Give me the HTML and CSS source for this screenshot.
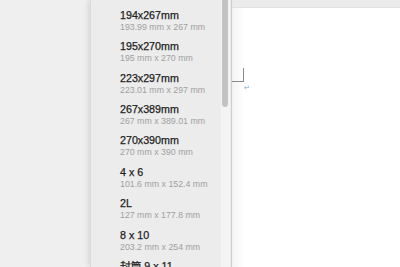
FILE: index.html
```html
<!DOCTYPE html>
<html>
<head>
<meta charset="utf-8">
<link rel="stylesheet" href="styles.css">
</head>
<body>
<div class="app">
  <div class="side"></div>
  <div class="menu">
    <ul class="list">
      <li class="item"><div class="title">194x267mm</div><div class="sub">193.99 mm x 267 mm</div></li>
      <li class="item"><div class="title">195x270mm</div><div class="sub">195 mm x 270 mm</div></li>
      <li class="item"><div class="title">223x297mm</div><div class="sub">223.01 mm x 297 mm</div></li>
      <li class="item"><div class="title">267x389mm</div><div class="sub">267 mm x 389.01 mm</div></li>
      <li class="item"><div class="title">270x390mm</div><div class="sub">270 mm x 390 mm</div></li>
      <li class="item"><div class="title">4 x 6</div><div class="sub">101.6 mm x 152.4 mm</div></li>
      <li class="item"><div class="title">2L</div><div class="sub">127 mm x 177.8 mm</div></li>
      <li class="item"><div class="title">8 x 10</div><div class="sub">203.2 mm x 254 mm</div></li>
      <li class="item"><div class="title">封筒 9 x 11</div><div class="sub">228.6 mm x 279.4 mm</div></li>
    </ul>
    <div class="track"><div class="thumb"></div></div>
  </div>
  <div class="doc">
    <div class="topbar"></div>
    <div class="page">
      <div class="mark"></div>
      <div class="ret">↵</div>
    </div>
  </div>
</div>
</body>
</html>
```

FILE: styles.css
```css
html, body {
  margin: 0;
  padding: 0;
  width: 400px;
  height: 267px;
  overflow: hidden;
  background: #eeeeee;
}
.app {
  display: flex;
  width: 400px;
  height: 267px;
}
.side {
  width: 90px;
  flex: none;
  background: #efefef;
}
.menu {
  position: relative;
  width: 140px;
  flex: none;
  background: #ececec;
  border-left: 1px solid #dadada;
  box-shadow: -2px 0 5px rgba(0, 0, 0, 0.10);
  overflow: hidden;
  z-index: 2;
}
.list {
  list-style: none;
  margin: 0;
  padding: 5.1px 0 0 29px;
}
.item {
  height: 31.4px;
  box-sizing: border-box;
  padding-top: 3.7px;
  font-family: "Liberation Sans", Arial, "Noto Sans CJK JP", sans-serif;
}
.title {
  font-size: 10.7px;
  line-height: 13px;
  color: #222222;
  -webkit-text-stroke: 0.25px #222222;
  white-space: nowrap;
}
.sub {
  font-size: 8.8px;
  line-height: 11px;
  color: #a0a0a0;
  white-space: nowrap;
}
.track {
  position: absolute;
  top: 0;
  right: 1px;
  width: 9px;
  height: 267px;
  background: #f4f4f4;
}
.thumb {
  margin-left: 1px;
  width: 6px;
  height: 107px;
  background: #c3c3c3;
  border-radius: 0 0 3px 3px;
}
.doc {
  flex: 1;
  display: flex;
  flex-direction: column;
  background: #ffffff;
  border-left: 1px solid #d2d2d2;
}
.topbar {
  height: 7px;
  flex: none;
  background: #ebebeb;
  border-bottom: 1px solid #e2e2e2;
}
.page {
  position: relative;
  flex: 1;
  background: linear-gradient(to right, #f3f3f3 0px, #ffffff 12px);
}
.mark {
  position: absolute;
  left: 0;
  top: 60px;
  width: 11px;
  height: 13px;
  border-right: 1px solid #8a8a8a;
  border-bottom: 1px solid #8a8a8a;
}
.ret {
  position: absolute;
  left: 12px;
  top: 76px;
  font-family: "DejaVu Sans", sans-serif;
  font-size: 7px;
  line-height: 8px;
  color: #7fa9d6;
}
```
